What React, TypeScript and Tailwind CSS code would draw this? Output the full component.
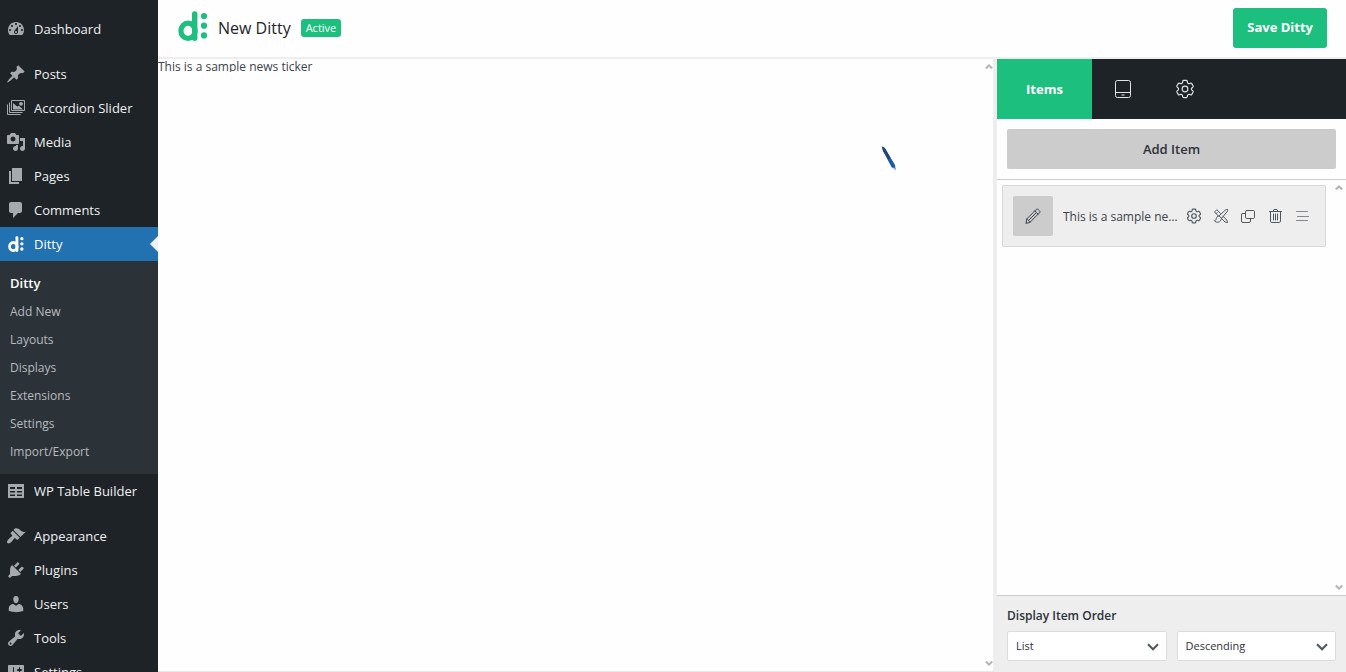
import type { ReactNode } from "react";
import { HiOutlineCog6Tooth } from "react-icons/hi2";

type MenuItem = { label: string; icon: ReactNode; gap?: boolean };

// 20x20 admin menu glyph
function Glyph({ d }: { d: string }) {
  return (
    <svg viewBox="0 0 20 20" className="size-5" fill="currentColor" fillRule="evenodd" aria-hidden="true">
      <path d={d} />
    </svg>
  );
}

function DittyMark({ className }: { className: string }) {
  return (
    <svg viewBox="0 0 30 30" className={className} fill="none" aria-hidden="true">
      <ellipse cx="10" cy="19.8" rx="7.1" ry="7.6" stroke="currentColor" strokeWidth="5.2" />
      <path d="M16.700 3v24.200" stroke="currentColor" strokeWidth="5.4" strokeLinecap="round" />
      <g fill="currentColor">
        <circle cx="26" cy="5" r="3.1" />
        <circle cx="26" cy="14.7" r="3.1" />
        <circle cx="26" cy="24.4" r="3.1" />
      </g>
    </svg>
  );
}

const topItems: MenuItem[] = [
  {
    label: "Dashboard",
    icon: (
      <Glyph d="M3.76 16h12.48c1.1-1.37 1.76-3.11 1.76-5 0-4.42-3.58-8-8-8s-8 3.58-8 8c0 1.89.66 3.63 1.76 5zM10 4c.55 0 1 .45 1 1s-.45 1-1 1-1-.45-1-1 .45-1 1-1zM6 6c.55 0 1 .45 1 1s-.45 1-1 1-1-.45-1-1 .45-1 1-1zm8 0c.55 0 1 .45 1 1s-.45 1-1 1-1-.45-1-1 .45-1 1-1zm-5.37 5.55L12 7v6c0 1.1-.9 2-2 2s-2-.9-2-2c0-.57.24-1.08.63-1.45zM4 10c.55 0 1 .45 1 1s-.45 1-1 1-1-.45-1-1 .45-1 1-1zm12 0c.55 0 1 .45 1 1s-.45 1-1 1-1-.45-1-1 .45-1 1-1zm-5 3c0-.55-.45-1-1-1s-1 .45-1 1 .45 1 1 1 1-.45 1-1z" />
    ),
  },
  {
    label: "Posts",
    gap: true,
    icon: (
      <Glyph d="M10.44 3.02l1.82-1.82 6.36 6.35-1.83 1.82c-1.05-.68-2.48-.57-3.41.36l-.75.75c-.92.93-1.04 2.35-.35 3.41l-1.83 1.82-2.41-2.41-2.8 2.79c-.42.42-3.38 2.71-3.8 2.29s1.86-3.39 2.28-3.81l2.79-2.79L4.1 9.36l1.83-1.82c1.05.69 2.48.57 3.4-.36l.75-.75c.93-.92 1.05-2.35.36-3.41z" />
    ),
  },
  {
    label: "Accordion Slider",
    icon: (
      <svg viewBox="0 0 20 20" className="size-5" fill="none" stroke="currentColor" aria-hidden="true">
        <path d="M5.500 2.500h13v10h-13z" />
        <path d="M3.500 4.500v10h13M1.500 6.500v10h13" />
        <path d="M7 11.500V5l4.200 3.500 1.600-.7 4.400 3.700z" fill="currentColor" stroke="none" />
        <circle cx="15" cy="5.800" r="1.900" fill="currentColor" stroke="none" />
      </svg>
    ),
  },
  {
    label: "Media",
    icon: (
      <Glyph d="M13 11V4c0-.55-.45-1-1-1h-1.67L9 1H5L3.67 3H2c-.55 0-1 .45-1 1v7c0 .55.45 1 1 1h10c.55 0 1-.45 1-1zM7 4.5c1.38 0 2.5 1.12 2.5 2.5S8.38 9.5 7 9.5 4.5 8.38 4.5 7 5.62 4.5 7 4.5zM14 6h5v10.5c0 1.38-1.12 2.5-2.5 2.5S14 17.88 14 16.5s1.12-2.5 2.5-2.5c.17 0 .34.02.5.05V9h-3V6zm-4 8.05V13h2v3.5c0 1.38-1.12 2.5-2.5 2.5S7 17.88 7 16.5 8.12 14 9.5 14c.17 0 .34.02.5.05z" />
    ),
  },
  { label: "Pages", icon: <Glyph d="M6 15V2h10v13H6zm-1 1h8v2H3V5h2v11z" /> },
  {
    label: "Comments",
    icon: (
      <Glyph d="M5 2h9c1.1 0 2 .9 2 2v7c0 1.1-.9 2-2 2h-2l-5 5v-5H5c-1.1 0-2-.9-2-2V4c0-1.1.9-2 2-2z" />
    ),
  },
];

const subItems = ["Add New", "Layouts", "Displays", "Extensions", "Settings", "Import/Export"];

const bottomItems: MenuItem[] = [
  {
    label: "WP Table Builder",
    icon: (
      <Glyph d="M2 3h16v14H2zM4 6v2h5V6zm7 0v2h5V6zM4 10v1.500h5V10zm7 0v1.500h5V10zM4 13.500v1.500h5v-1.500zm7 0v1.500h5v-1.500z" />
    ),
  },
  {
    label: "Appearance",
    gap: true,
    icon: (
      <Glyph d="M14.48 11.06L7.41 3.99l1.5-1.5c.5-.56 2.3-.47 3.51.32 1.21.8 1.43 1.28 2.91 2.1 1.18.64 2.45 1.26 4.45.85zm-.71.71L6.7 4.7 4.93 6.47c-.39.39-.39 1.02 0 1.41l1.06 1.06c.39.39.39 1.03 0 1.42-.6.6-1.43 1.11-2.21 1.69-.35.26-.7.53-1.01.84C1.43 14.23.4 16.08 1.4 17.07c.99 1 2.84-.03 4.18-1.36.31-.31.58-.66.85-1.02.57-.78 1.08-1.61 1.69-2.21.39-.39 1.02-.39 1.41 0l1.06 1.06c.39.39 1.02.39 1.41 0z" />
    ),
  },
  {
    label: "Plugins",
    icon: (
      <Glyph d="M13.11 4.36L9.87 7.6 8 5.73l3.24-3.24c.35-.34 1.05-.2 1.56.32.52.51.66 1.21.31 1.55zm-8 1.77l.91-1.12 9.01 9.01-1.19.84c-.71.71-2.63 1.16-3.82 1.16H6.14L4.9 17.26c-.59.59-1.54.59-2.12 0-.59-.58-.59-1.53 0-2.12l1.24-1.24v-3.88c0-1.13.4-3.19 1.09-3.89zm7.26 3.97l3.24-3.24c.34-.35 1.04-.21 1.55.31.52.51.66 1.21.31 1.55l-3.24 3.25z" />
    ),
  },
  {
    label: "Users",
    icon: (
      <Glyph d="M10 9.25c-2.27 0-2.73-3.44-2.73-3.44C7 4.02 7.82 2 9.97 2c2.16 0 2.98 2.02 2.71 3.81 0 0-.41 3.44-2.68 3.44zm0 2.57L12.72 10c2.39 0 4.52 2.33 4.52 4.53v2.49s-3.65 1.13-7.24 1.13c-3.65 0-7.24-1.13-7.24-1.13v-2.49c0-2.25 1.94-4.48 4.47-4.48z" />
    ),
  },
  {
    label: "Tools",
    icon: (
      <Glyph d="M16.68 9.77c-1.34 1.34-3.3 1.67-4.95.99l-5.41 6.52c-.99.99-2.59.99-3.58 0s-.99-2.59 0-3.57l6.52-5.42c-.68-1.65-.35-3.61.99-4.95 1.28-1.28 3.12-1.62 4.72-1.06l-2.89 2.89 2.82 2.82 2.86-2.87c.53 1.58.18 3.39-1.08 4.65zM3.81 16.21c.4.39 1.04.39 1.43 0 .4-.4.4-1.04 0-1.43-.39-.4-1.03-.4-1.43 0-.39.39-.39 1.03 0 1.43z" />
    ),
  },
  {
    label: "Settings",
    icon: (
      <Glyph d="M18 16V4c0-.55-.45-1-1-1H3c-.55 0-1 .45-1 1v12c0 .55.45 1 1 1h14c.55 0 1-.45 1-1zM8 11h1c.55 0 1 .45 1 1s-.45 1-1 1H8v1.5c0 .28-.22.5-.5.5s-.5-.22-.5-.5V13H6c-.55 0-1-.45-1-1s.45-1 1-1h1V5.500c0-.28.22-.5.5-.5s.5.22.5.5V11zm5-2h-1c-.55 0-1-.45-1-1s.45-1 1-1h1V5.500c0-.28.22-.5.5-.5s.5.22.5.5V7h1c.55 0 1 .45 1 1s-.45 1-1 1h-1v5.500c0 .28-.22.5-.5.5s-.5-.22-.5-.5V9z" />
    ),
  },
];

function MenuLink({ item }: { item: MenuItem }) {
  return (
    <li className={item.gap ? "pt-[11px]" : ""}>
      <a href="#" className="flex h-[34px] items-center gap-2 pl-1.5 text-[#f0f0f1]">
        <span className="text-[#a7aaad]">{item.icon}</span>
        <span className="whitespace-nowrap">{item.label}</span>
      </a>
    </li>
  );
}

function Sidebar() {
  return (
    <nav className="w-[158px] shrink-0 overflow-hidden bg-[#1d2327] pt-3 text-[13px] leading-5">
      <ul>
        {topItems.map((item) => (
          <MenuLink key={item.label} item={item} />
        ))}
        <li>
          <a href="#" className="relative flex h-[34px] items-center gap-2 bg-[#2271b1] pl-1.5 text-white">
            <span className="flex w-5 justify-center">
              <DittyMark className="size-4" />
            </span>
            Ditty
            <span className="absolute right-0 top-[9px] border-y-8 border-r-8 border-y-transparent border-r-[#f0f0f1]"></span>
          </a>
          <ul className="bg-[#2c3338] py-2 text-xs">
            <li>
              <a href="#" className="flex h-[29px] items-center pl-2.5 text-[13px] font-semibold text-white">
                Ditty
              </a>
            </li>
            {subItems.map((label) => (
              <li key={label}>
                <a href="#" className="flex h-7 items-center pl-2.5 text-[#b7babd]">
                  {label}
                </a>
              </li>
            ))}
          </ul>
        </li>
        {bottomItems.map((item) => (
          <MenuLink key={item.label} item={item} />
        ))}
      </ul>
    </nav>
  );
}

function ScrollArrows() {
  return (
    <div className="flex shrink-0 flex-col items-center justify-between py-1 text-[#b4b4b8]" aria-hidden="true">
      <svg viewBox="0 0 8 8" className="size-2" fill="none" stroke="currentColor" strokeWidth="2">
        <path d="M0.800 5.500 4 2.300 7.200 5.500" />
      </svg>
      <svg viewBox="0 0 8 8" className="size-2" fill="none" stroke="currentColor" strokeWidth="2">
        <path d="M0.800 2.500 4 5.700 7.200 2.500" />
      </svg>
    </div>
  );
}

function Preview() {
  return (
    <main className="relative flex min-w-0 flex-1 border-b border-[#e8e8ea]">
      <div className="min-w-0 flex-1">
        <p className="h-[13px] overflow-hidden text-xs leading-4 text-[#3c434a]">This is a sample news ticker</p>
      </div>
      <ScrollArrows />
      {/* pen pointer */}
      <svg viewBox="0 0 16 26" className="absolute right-[96px] top-[86px] h-[26px] w-4" aria-hidden="true">
        <path d="M1 1.500 3.800 3 14 20 14.700 25 10.500 22 2 6z" fill="#1c58a8" />
        <path d="M1 1.500 3.800 3 9.300 12.500 7.300 14.500 2 6z" fill="#23466f" />
        <path d="M13.500 22.500 14.800 25.500 11.500 23z" fill="#c9c4cf" />
      </svg>
    </main>
  );
}

function LineIcon({ children }: { children: ReactNode }) {
  return (
    <svg
      viewBox="0 0 16 16"
      className="size-4"
      fill="none"
      stroke="currentColor"
      strokeLinecap="round"
      strokeLinejoin="round"
      aria-hidden="true"
    >
      {children}
    </svg>
  );
}

const itemActions = [
  {
    label: "Item settings",
    icon: <HiOutlineCog6Tooth className="size-4" viewBox="1.5 1.5 21 21" strokeWidth={1.5} />,
  },
  {
    label: "Edit layout",
    icon: (
      <LineIcon>
        <path d="M5.300 7.800 1.500 4l2.300-2.300L7.600 5.500M3.200 5.500l1-1M10 8.300l4 3.900.5 2.300-2.400-.4-3.300-3.300" />
        <path d="M14.500 1.700c.6.600.2 1.300-.3 1.900L8.600 10.300 6 7.900l6.300-5.800c.700-.600 1.500-1 2.200-.4z" />
        <path d="M6 8c-1.700.1-2.500 1-2.700 2.600-.1 1.300-.8 2-2 2.100 1.700 2.400 6.800 2.400 7.200-2.400" />
      </LineIcon>
    ),
  },
  {
    label: "Clone item",
    icon: (
      <LineIcon>
        <rect x="5.500" y="2.500" width="9" height="8" rx="1.200" />
        <path d="M5.500 5.500H3A1.300 1.300 0 0 0 1.500 7v6A1.400 1.400 0 0 0 3 14.500h6a1.400 1.400 0 0 0 1.500-1.500v-2.500" />
      </LineIcon>
    ),
  },
  {
    label: "Delete item",
    icon: (
      <LineIcon>
        <path d="M2.500 3.500h12M6 3.500l1-2h3l1 2M3.500 3.500v9.700c0 .8.500 1.300 1.300 1.300h7.400c.8 0 1.300-.5 1.300-1.300V3.500M6.500 6v6M8.500 6v6M10.500 6v6" />
      </LineIcon>
    ),
  },
  {
    label: "Move item",
    icon: (
      <LineIcon>
        <path d="M2.500 3.500h11M3.500 8.500h11M2.500 12.500h11" stroke="#85878a" />
      </LineIcon>
    ),
  },
];

function TickerItem() {
  return (
    <div className="flex items-center rounded-xs border border-[#d8d8d8] bg-[#eeeeee] p-2.5">
      <button aria-label="Edit item" className="flex size-10 shrink-0 items-center justify-center rounded-xs bg-[#cccccc] text-[#3c434a]">
        <LineIcon>
          <path d="m1 15 .9-4.200L11.200 1.500c.6-.6 1.400-.6 2 0l1.300 1.300c.6.600.6 1.400 0 2L5.200 14.100zM1.900 10.800l3.300 3.300M9.800 2.900l3.300 3.300M4.200 11.800l7-7" />
        </LineIcon>
      </button>
      <span className="ml-2.5 min-w-0 flex-1 truncate pt-px text-xs leading-5 text-[#3c434a]">This is a sample news ticker</span>
      <div className="ml-1 flex gap-[11px] pr-[5px] text-[#50575e]">
        {itemActions.map((action) => (
          <button key={action.label} aria-label={action.label}>
            {action.icon}
          </button>
        ))}
      </div>
    </div>
  );
}

function OrderSelect({ label, options }: { label: string; options: string[] }) {
  return (
    <div className="relative flex-1">
      <select
        aria-label={label}
        className="h-[30px] w-full appearance-none rounded-xs border border-[#dcdcde] bg-white px-2 text-[11px] text-[#2c3338]"
      >
        {options.map((option) => (
          <option key={option}>{option}</option>
        ))}
      </select>
      <svg
        viewBox="0 0 12 8"
        className="pointer-events-none absolute right-2 top-3 h-2 w-3"
        fill="none"
        stroke="#50575e"
        strokeWidth="2"
        aria-hidden="true"
      >
        <path d="M1 1.300 6 6.300 11 1.300" />
      </svg>
    </div>
  );
}

function EditorPanel() {
  return (
    <aside className="flex w-[353px] shrink-0 flex-col border-l-4 border-[#eeeeee]">
      <div className="flex h-[60px] shrink-0 bg-[#1d2327] text-[#e4e4e6]">
        <button className="w-[95px] bg-[#1cbf7e] pt-0.5 text-[13px] font-bold text-white">Items</button>
        <button aria-label="Display" className="flex w-[62px] items-center justify-center">
          <svg viewBox="0 0 16 18" className="h-[18px] w-4" fill="none" stroke="currentColor" aria-hidden="true">
            <rect x="0.500" y="0.500" width="15" height="17" rx="2" />
            <path d="M0.500 12.500h15M6.500 15h3" />
          </svg>
        </button>
        <button aria-label="Settings" className="flex w-[61px] items-center justify-center">
          <HiOutlineCog6Tooth className="size-5" viewBox="1.5 1.5 21 21" strokeWidth={1.2} />
        </button>
      </div>
      <div className="flex border-b border-[#cccccc] p-2.5">
        <button className="h-10 flex-1 rounded-xs bg-[#cccccc] pt-0.5 text-[13px] font-semibold text-[#2c3338]">
          Add Item
        </button>
      </div>
      <div className="flex min-h-0 flex-1">
        <div className="min-w-0 flex-1 p-[5px]">
          <TickerItem />
        </div>
        <div className="flex w-[15px] justify-center">
          <ScrollArrows />
        </div>
      </div>
      <div className="border-t border-[#cccccc] bg-[#eeeeee] px-2.5 pb-[11px] pt-2.5">
        <h2 className="mb-[5px] text-xs font-semibold leading-5 text-[#2c3338]">Display Item Order</h2>
        <div className="flex gap-2.5">
          <OrderSelect label="Display item order" options={["List", "Random"]} />
          <OrderSelect label="Order direction" options={["Descending", "Ascending"]} />
        </div>
      </div>
    </aside>
  );
}

export default function App() {
  return (
    <div className="flex h-screen overflow-hidden bg-[#fefefe] font-['Open_Sans','Noto_Sans',sans-serif]">
      <Sidebar />
      <div className="flex min-w-0 flex-1 flex-col">
        <header className="flex h-[59px] shrink-0 items-center border-b-2 border-[#eeeeee] pb-px pl-5 pr-[19px]">
          <DittyMark className="mb-1 size-[30px] text-[#1cbf7e]" />
          <h1 className="ml-2.5 text-base font-medium text-[#1d2327]">New Ditty</h1>
          <span className="ml-2.5 rounded-[3px] bg-[#1cbf7e] px-[5px] text-[11px] leading-[18px] text-white">Active</span>
          <button className="ml-auto h-10 rounded-[3px] bg-[#1cbf7e] px-3.5 text-[13px] font-bold text-white">
            Save Ditty
          </button>
        </header>
        <div className="flex min-h-0 flex-1">
          <Preview />
          <EditorPanel />
        </div>
      </div>
    </div>
  );
}
